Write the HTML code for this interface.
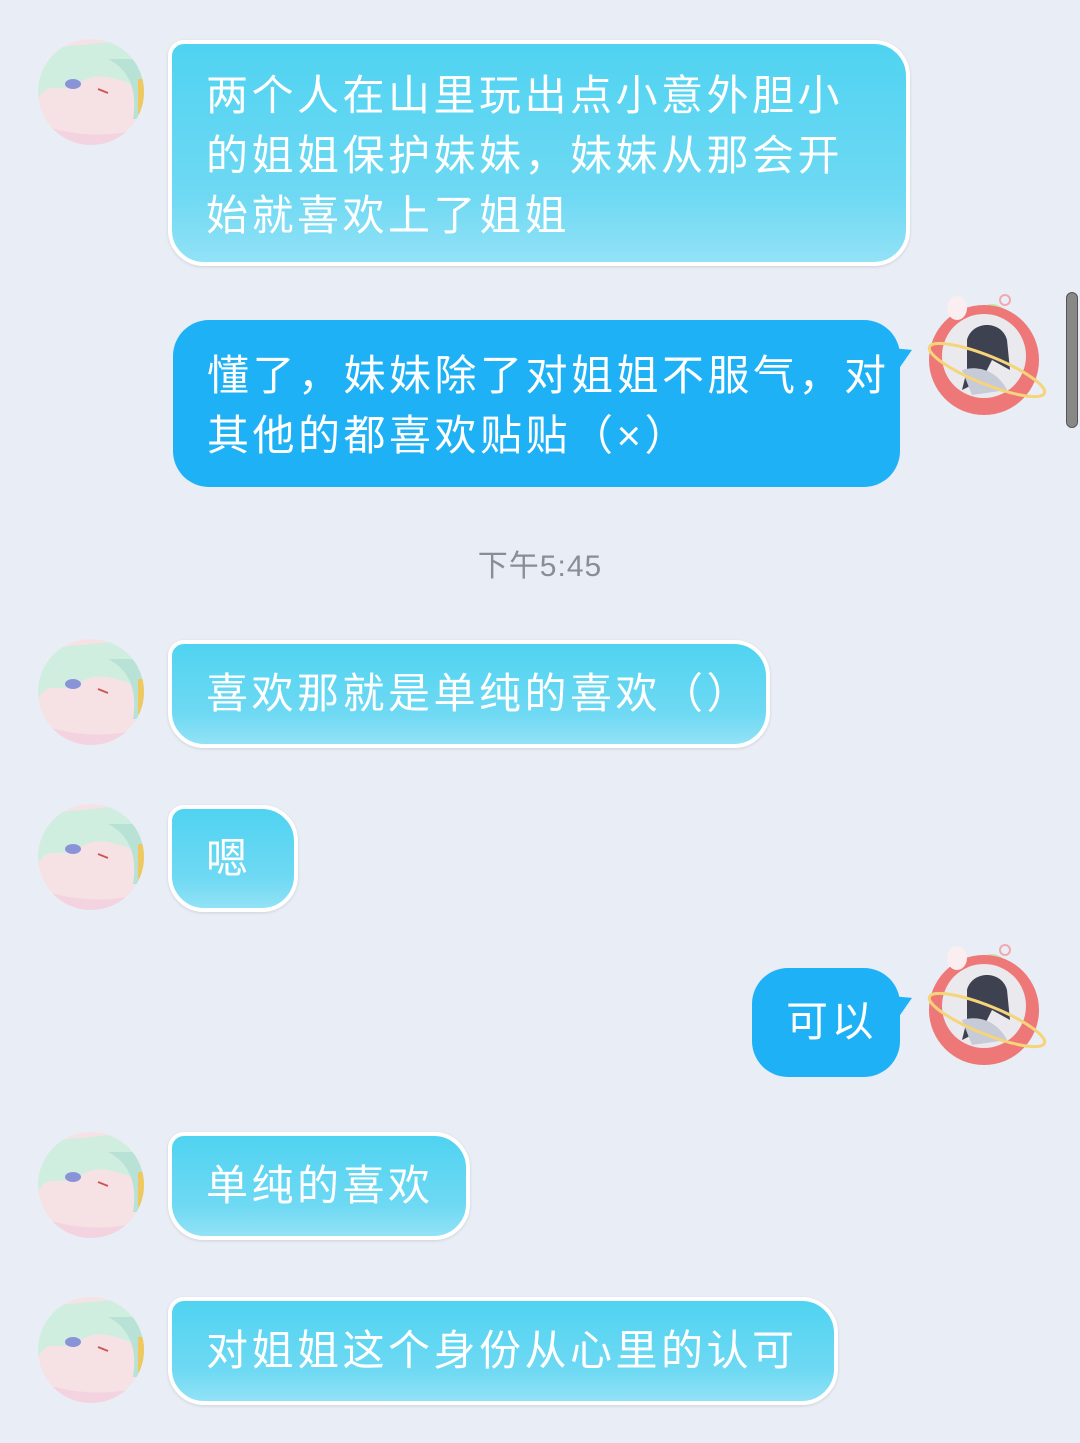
<!DOCTYPE html>
<html><head><meta charset="utf-8"><style>
*{margin:0;padding:0;box-sizing:border-box}
body{width:1080px;height:1443px;background:#e9edf5;position:relative;overflow:hidden;font-family:"Liberation Sans","Noto Sans CJK SC",sans-serif}
.b{position:absolute;color:#fff;font-size:42px;letter-spacing:3.5px;line-height:60px;padding-left:34px}
.l{border:4px solid #fff;border-radius:16px 36px 36px 36px;background:linear-gradient(#4fd3f1,#6fd9f3 70%,#92e2f6);box-shadow:0 1px 3px rgba(0,0,0,.12)}
.r{background:#1fb1f5;border-radius:36px}
.tail{position:absolute;width:22px;height:24px;background:#1fb1f5;right:-12px;top:28px;clip-path:polygon(0 0,100% 8%,30% 100%)}
.av{position:absolute;width:106px;height:106px;border-radius:50%;overflow:hidden}
.ra{position:absolute;width:130px;height:130px}
.t{position:absolute;left:0;width:1080px;text-align:center;top:541px;font-size:30px;color:#8a8d94;letter-spacing:1px}
</style></head><body>
<svg width="0" height="0" style="position:absolute"><defs>
<symbol id="la" viewBox="0 0 106 106"><circle cx="53" cy="53" r="53" fill="#f6e2e4"/><path d="M0 10 L106 0 L106 50 C80 40 60 30 40 45 C25 55 10 40 0 60Z" fill="#cfeee0"/><path d="M70 20 C90 30 100 50 95 80 L106 80 L106 20Z" fill="#b9e2d6"/><ellipse cx="35" cy="45" rx="8" ry="5" fill="#8a93d8"/><path d="M60 50 l10 4" stroke="#c55" stroke-width="2"/><path d="M0 85 C30 95 60 100 106 90 L106 106 L0 106Z" fill="#f3d3df"/><path d="M100 40 L106 40 L106 75 L100 75Z" fill="#f0c860"/></symbol>
<symbol id="ra" viewBox="0 0 130 130"><circle cx="70" cy="30" r="16" fill="#c6e6a8"/><circle cx="62" cy="70" r="55" fill="#ee7777"/><circle cx="62" cy="66" r="42" fill="#e9e9ee"/><path d="M45 50 C50 30 80 30 85 50 L88 80 L70 70 L60 90 L40 100 L45 80Z" fill="#3e4150"/><path d="M40 80 C55 75 75 80 85 100 L50 105Z" fill="#c7cbd8"/><ellipse cx="65" cy="80" rx="62" ry="14" fill="none" stroke="#f6d47a" stroke-width="3" transform="rotate(22 65 80)"/><ellipse cx="35" cy="18" rx="10" ry="12" fill="#fbeef0"/><circle cx="83" cy="10" r="5" fill="none" stroke="#f3a8b0" stroke-width="2"/></symbol>
</defs></svg>

<svg class="av" style="left:38px;top:39px"><use href="#la"/></svg>
<div class="b l" style="left:168px;top:40px;width:742px;height:226px;padding-top:22px">两个人在山里玩出点小意外胆小<br>的姐姐保护妹妹，妹妹从那会开<br>始就喜欢上了姐姐</div>

<div class="b r" style="left:173px;top:320px;width:727px;height:167px;padding-top:26px">懂了，妹妹除了对姐姐不服气，对<br>其他的都喜欢贴贴（×）<div class="tail"></div></div>
<svg class="ra" style="left:922px;top:290px"><use href="#ra"/></svg>
<div style="position:absolute;left:1066px;top:292px;width:12px;height:136px;border-radius:6px;background:#888;border:1px solid #555"></div>

<div class="t">下午5:45</div>

<svg class="av" style="left:38px;top:639px"><use href="#la"/></svg>
<div class="b l" style="left:168px;top:640px;width:602px;height:108px;padding-top:20px">喜欢那就是单纯的喜欢（）</div>

<svg class="av" style="left:38px;top:804px"><use href="#la"/></svg>
<div class="b l" style="left:168px;top:805px;width:130px;height:107px;padding-top:20px">嗯</div>

<div class="b r" style="left:752px;top:968px;width:148px;height:109px;padding-top:24px;padding-left:34px">可以<div class="tail"></div></div>
<svg class="ra" style="left:922px;top:940px"><use href="#ra"/></svg>

<svg class="av" style="left:38px;top:1132px"><use href="#la"/></svg>
<div class="b l" style="left:168px;top:1132px;width:302px;height:108px;padding-top:20px">单纯的喜欢</div>

<svg class="av" style="left:38px;top:1297px"><use href="#la"/></svg>
<div class="b l" style="left:168px;top:1297px;width:670px;height:108px;padding-top:20px">对姐姐这个身份从心里的认可</div>
</body></html>
